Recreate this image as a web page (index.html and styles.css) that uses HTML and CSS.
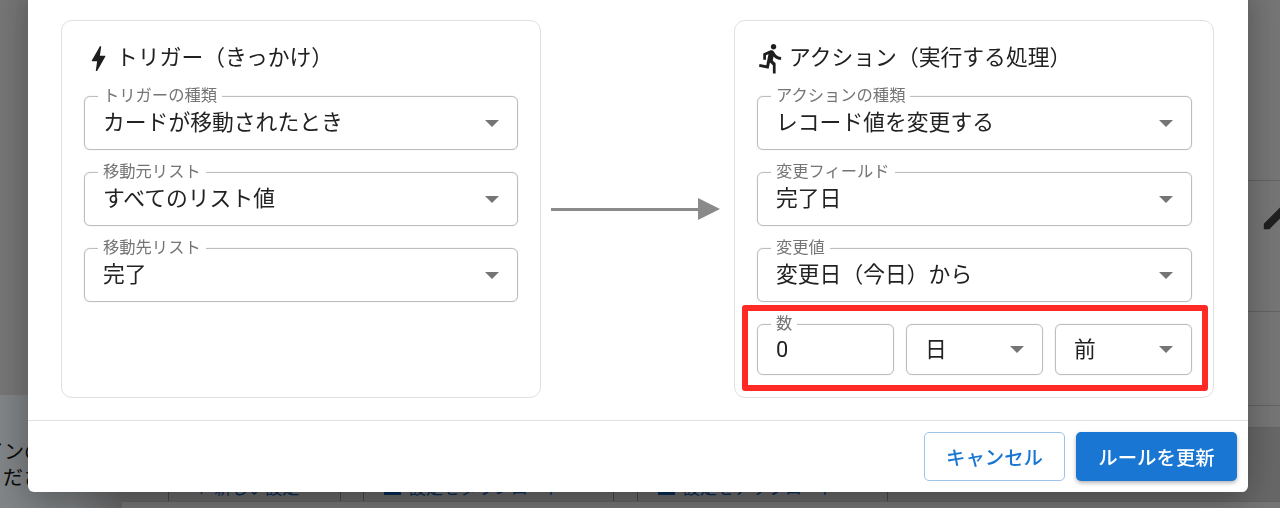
FILE: index.html
```html
<!DOCTYPE html>
<html lang="ja">
<head>
<meta charset="utf-8">
<title>ルールを更新</title>
<link rel="stylesheet" href="styles.css">
</head>
<body>
<div class="page">
  <aside class="side">
    <div class="side-note">
      <p class="note-line note-a">インの</p>
      <p class="note-line note-b">だささ</p>
    </div>
  </aside>
  <main class="main">
    <div class="row row-a"></div>
    <div class="row row-b">
      <svg class="pencil" viewBox="0 0 24 24"><path d="M3 17.25V21h3.75L17.81 9.94l-3.75-3.75L3 17.25zM20.71 7.04c.39-.39.39-1.02 0-1.41l-2.34-2.34c-.39-.39-1.02-.39-1.41 0l-1.83 1.83 3.75 3.75 1.83-1.83z"/></svg>
    </div>
    <div class="row row-c"></div>
    <div class="row row-d"></div>
    <div class="row row-e">
      <div class="tool tool-1"><span class="tool-text">＋ 新しい設定</span></div>
      <div class="tool tool-2"><span class="tool-bar"></span><span class="tool-text">設定をダウンロード</span></div>
      <div class="tool tool-2"><span class="tool-bar"></span><span class="tool-text">設定をアップロード</span></div>
    </div>
  </main>
</div>
<div class="scrim">
  <section class="modal">
    <div class="modal-body">
      <div class="card">
        <h2 class="card-title">
          <svg class="title-icon" viewBox="0 0 24 24"><path d="M11 21h-1l1-7H7.5c-.58 0-.57-.32-.38-.66.19-.34.05-.08.07-.12C8.48 10.94 10.42 7.54 13 3h1l-1 7h3.5c.49 0 .56.33.47.51l-.07.15C12.96 17.55 11 21 11 21z"/></svg>
          トリガー（きっかけ）
        </h2>
        <div class="field"><span class="label">トリガーの種類</span><span class="value">カードが移動されたとき</span><span class="caret"></span></div>
        <div class="field"><span class="label">移動元リスト</span><span class="value">すべてのリスト値</span><span class="caret"></span></div>
        <div class="field"><span class="label">移動先リスト</span><span class="value">完了</span><span class="caret"></span></div>
      </div>
      <div class="flow-arrow"><span class="arrow-line"></span><span class="arrow-head"></span></div>
      <div class="card card-action">
        <h2 class="card-title">
          <svg class="title-icon" viewBox="0 0 24 24"><path d="M13.49 5.48c1.1 0 2-.9 2-2s-.9-2-2-2-2 .9-2 2 .9 2 2 2zm-3.6 13.9l1-4.4 2.1 2v6h2v-7.5l-2.1-2 .6-3c1.3 1.5 3.3 2.5 5.5 2.5v-2c-1.9 0-3.5-1-4.3-2.4l-1-1.6c-.4-.6-1-1-1.7-1-.3 0-.5.1-.8.1l-5.2 2.2v4.7h2v-3.4l1.8-.7-1.6 8.1-4.9-1-.4 2 7 1.4z"/></svg>
          アクション（実行する処理）
        </h2>
        <div class="field"><span class="label">アクションの種類</span><span class="value">レコード値を変更する</span><span class="caret"></span></div>
        <div class="field"><span class="label">変更フィールド</span><span class="value">完了日</span><span class="caret"></span></div>
        <div class="field"><span class="label">変更値</span><span class="value">変更日（今日）から</span><span class="caret"></span></div>
        <div class="field-row">
          <div class="field field-small"><span class="label">数</span><span class="value">0</span></div>
          <div class="field field-small"><span class="value">日</span><span class="caret"></span></div>
          <div class="field field-small"><span class="value">前</span><span class="caret"></span></div>
          <div class="highlight"></div>
        </div>
      </div>
    </div>
    <footer class="modal-footer">
      <button class="btn btn-outline">キャンセル</button>
      <button class="btn btn-solid">ルールを更新</button>
    </footer>
  </section>
</div>
</body>
</html>
```

FILE: styles.css
```css
* { box-sizing: border-box; }
html, body { margin: 0; height: 100%; overflow: hidden; }
body {
  font-family: Roboto, "Noto Sans CJK JP", sans-serif;
  color: #212121;
  background: #d6d6d6;
}

/* page behind the dialog */
.page { display: flex; height: 508px; overflow: hidden; }
.side { width: 122px; flex: none; padding-top: 395px; }
.side-note {
  height: 113px;
  background: linear-gradient(to right, #ecf2f6 0, #dfe4e8 60%, #bdbdbd 100%);
  padding-top: 44px;
  overflow: hidden;
}
.note-line { margin: 0; font-size: 20px; line-height: 26px; white-space: nowrap; color: #111; }
.note-a { margin-left: -16px; }
.note-b { margin-left: 3px; }
.main { flex: 1; display: flex; flex-direction: column; }
.row { border-bottom: 1px solid #b4b4b4; flex: none; }
.row-a { height: 181px; }
.row-b { height: 131px; display: flex; justify-content: flex-end; align-items: flex-start; padding-top: 19px; }
.row-c { height: 94px; }
.row-d { height: 22px; }
.row-e {
  height: 74px;
  display: flex;
  align-items: flex-end;
  padding-left: 46px;
  background: #bcbcbc;
}
.pencil { width: 32px; height: 32px; fill: #3a3a3a; margin-right: -13px; transform: scale(1.1); }
.tool {
  height: 36px;
  display: flex;
  align-items: center;
  gap: 8px;
  padding-top: 6px;
  border-left: 1px solid #6a86a6;
  border-right: 1px solid #6a86a6;
  color: #0d4f9c;
  font-size: 17px;
  white-space: nowrap;
}
.tool-1 { width: 173px; padding-left: 24px; margin-right: 22px; }
.tool-2 { width: 251px; padding-left: 20px; margin-right: 23px; }
.tool-bar { width: 17px; height: 18px; border-bottom: 3px solid #0d4f9c; }

/* dialog */
.scrim {
  position: fixed;
  inset: 0;
  background: rgba(0, 0, 0, .45);
  display: flex;
  justify-content: center;
  align-items: flex-end;
  padding-right: 4px;
  padding-bottom: 16px;
  will-change: transform;
}
.modal {
  width: 1220px;
  flex: none;
  background: #fff;
  border-radius: 0 0 6px 6px;
  box-shadow: 0 8px 36px rgba(0, 0, 0, .32);
}
.modal-body {
  display: grid;
  grid-template-columns: 480px 193px 480px;
  padding: 40px 34px 22px 33px;
}
.card {
  border: 1px solid #e0e0e0;
  border-radius: 11px;
  padding: 20px 22px 22px;
  display: flex;
  flex-direction: column;
  gap: 22px;
}
.card-action { padding-right: 21px; }
.card-title {
  margin: 0;
  height: 33px;
  display: flex;
  align-items: center;
  font-size: 21.8px;
  line-height: 31px;
  font-weight: 400;
  white-space: nowrap;
}
.title-icon { width: 33px; height: 33px; flex: none; margin: 1px 1px 0 -2px; fill: #1e1e1e; }

.field {
  position: relative;
  height: 54px;
  display: flex;
  align-items: center;
  justify-content: space-between;
  padding: 0 18px;
  border: 1px solid #bdbdbd;
  border-radius: 6px;
  box-shadow: 0 0 1px #b5b5b5;
}
.field-small { flex: 1; height: 51px; }
.label {
  position: absolute;
  left: 13px;
  top: -12px;
  padding: 0 5px;
  background: #fff;
  color: #757575;
  font-size: 16.3px;
  line-height: 22px;
  white-space: nowrap;
}
.value { font-size: 21.8px; line-height: 30px; white-space: nowrap; color: #222; }
.caret {
  width: 0;
  height: 0;
  border-left: 7px solid transparent;
  border-right: 7px solid transparent;
  border-top: 7px solid #757575;
}
.field-row { position: relative; display: flex; gap: 12px; }
.highlight {
  position: absolute;
  inset: -19px -16px -16px -15px;
  border: 6px solid #ff2a24;
  border-radius: 3px;
  pointer-events: none;
}

.flow-arrow { display: flex; align-items: center; padding-left: 10px; }
.arrow-line { width: 147px; height: 3px; background: #8a8a8a; }
.arrow-head {
  width: 0;
  height: 0;
  border-left: 22px solid #8a8a8a;
  border-top: 11px solid transparent;
  border-bottom: 11px solid transparent;
}

.modal-footer {
  height: 72px;
  border-top: 1px solid #e0e0e0;
  padding: 11px;
  display: flex;
  justify-content: flex-end;
  gap: 11px;
}
.btn {
  height: 49px;
  border-radius: 5px;
  font-family: inherit;
  font-size: 19.4px;
  font-weight: 500;
  white-space: nowrap;
}
.btn-outline { width: 141px; background: #fff; color: #1976d2; border: 1.4px solid #9cc3ea; }
.btn-solid {
  width: 161px;
  background: #1976d2;
  color: #fff;
  border: 0;
  box-shadow: 0 2px 4px rgba(0, 0, 0, .3);
}
```
